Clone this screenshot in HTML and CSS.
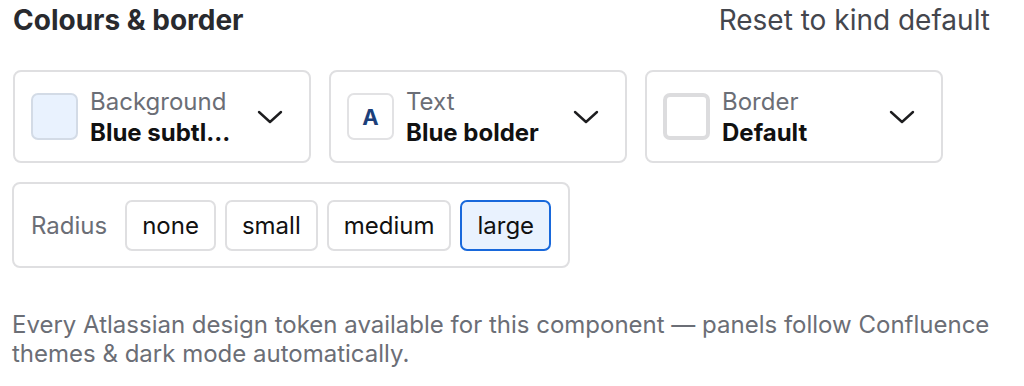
FILE: index.html
```html
<!DOCTYPE html>
<html>
<head>
    <title>Colours &amp; border</title>
    <link rel="stylesheet" href="styles.css">
</head>
<body>
    <div class="panel">
        <div class="panel-header">
            <h2>Colours &amp; border</h2>
            <button class="reset-link">Reset to kind default</button>
        </div>

        <div class="pickers">
            <div class="picker">
                <span class="swatch swatch-bg"></span>
                <div class="picker-text">
                    <span class="picker-label">Background</span>
                    <span class="picker-value">Blue subtl...</span>
                </div>
                <svg class="chevron" width="26" height="16" viewBox="0 0 26 16"><path d="M2 3 L13 13 L24 3" fill="none" stroke="#1d1d1f" stroke-width="2.4" stroke-linecap="round" stroke-linejoin="round"/></svg>
            </div>
            <div class="picker">
                <span class="swatch swatch-text">A</span>
                <div class="picker-text">
                    <span class="picker-label">Text</span>
                    <span class="picker-value">Blue bolder</span>
                </div>
                <svg class="chevron" width="26" height="16" viewBox="0 0 26 16"><path d="M2 3 L13 13 L24 3" fill="none" stroke="#1d1d1f" stroke-width="2.4" stroke-linecap="round" stroke-linejoin="round"/></svg>
            </div>
            <div class="picker">
                <span class="swatch swatch-border"></span>
                <div class="picker-text">
                    <span class="picker-label">Border</span>
                    <span class="picker-value">Default</span>
                </div>
                <svg class="chevron" width="26" height="16" viewBox="0 0 26 16"><path d="M2 3 L13 13 L24 3" fill="none" stroke="#1d1d1f" stroke-width="2.4" stroke-linecap="round" stroke-linejoin="round"/></svg>
            </div>
        </div>

        <div class="radius-box">
            <span class="radius-label">Radius</span>
            <button class="radius-btn">none</button>
            <button class="radius-btn">small</button>
            <button class="radius-btn">medium</button>
            <button class="radius-btn selected">large</button>
        </div>

        <p class="hint">Every Atlassian design token available for this component — panels follow Confluence themes &amp; dark mode automatically.</p>
    </div>
</body>
</html>
```

FILE: styles.css
```css
body {
    margin: 0;
    background: #ffffff;
    font-family: Inter, "Noto Sans", sans-serif;
    color: #1d1d1f;
}

.panel {
    padding: 5px 28px 0 12px;
}

.panel-header {
    display: flex;
    justify-content: space-between;
    align-items: center;
    height: 30px;
}

.panel-header h2 {
    margin: 0 0 0 1px;
    font-size: 28px;
    font-weight: 700;
    color: #292a2e;
}

.reset-link {
    border: none;
    background: none;
    padding: 0;
    margin-right: 6px;
    font-family: inherit;
    font-size: 28px;
    color: #44464d;
    cursor: pointer;
}

.pickers {
    display: flex;
    gap: 18px;
    margin: 35px 0 0 1px;
}

.picker {
    box-sizing: border-box;
    width: 298px;
    height: 93px;
    border: 2px solid #dfdfe1;
    border-radius: 8px;
    display: flex;
    align-items: center;
    padding: 0 26px 0 16px;
}

.swatch {
    box-sizing: border-box;
    width: 47px;
    height: 47px;
    border-radius: 7px;
    flex-shrink: 0;
    display: flex;
    align-items: center;
    justify-content: center;
}

.swatch-bg {
    background: #e9f2fe;
    border: 2px solid #d3dbe6;
}

.swatch-text {
    border: 2px solid #e2e2e4;
    color: #1c3f7a;
    font-weight: 700;
    font-size: 22px;
}

.swatch-border {
    border: 4px solid #dcdcde;
}

.picker-text {
    display: flex;
    flex-direction: column;
    margin-left: 12px;
    flex: 1;
}

.picker-label {
    font-size: 24px;
    line-height: 31px;
    color: #6b6e76;
}

.picker-value {
    font-size: 24px;
    line-height: 31px;
    font-weight: 700;
    color: #111111;
}

.chevron {
    flex-shrink: 0;
}

.radius-box {
    box-sizing: border-box;
    width: 558px;
    height: 86px;
    margin-top: 19px;
    border: 2px solid #dfdfe1;
    border-radius: 8px;
    display: flex;
    align-items: center;
    gap: 9px;
    padding: 0 17px;
}

.radius-label {
    font-size: 24px;
    color: #6b6e76;
    margin-right: 9px;
}

.radius-btn {
    height: 51px;
    padding: 0 15px;
    border: 2px solid #dfdfe1;
    border-radius: 7px;
    background: #ffffff;
    font-family: inherit;
    font-size: 24px;
    color: #111111;
    cursor: pointer;
}

.radius-btn.selected {
    background: #e9f2fe;
    border-color: #1868db;
}

.hint {
    margin: 42px 0 0 0;
    font-size: 24px;
    line-height: 29px;
    color: #6b6e76;
}
```
